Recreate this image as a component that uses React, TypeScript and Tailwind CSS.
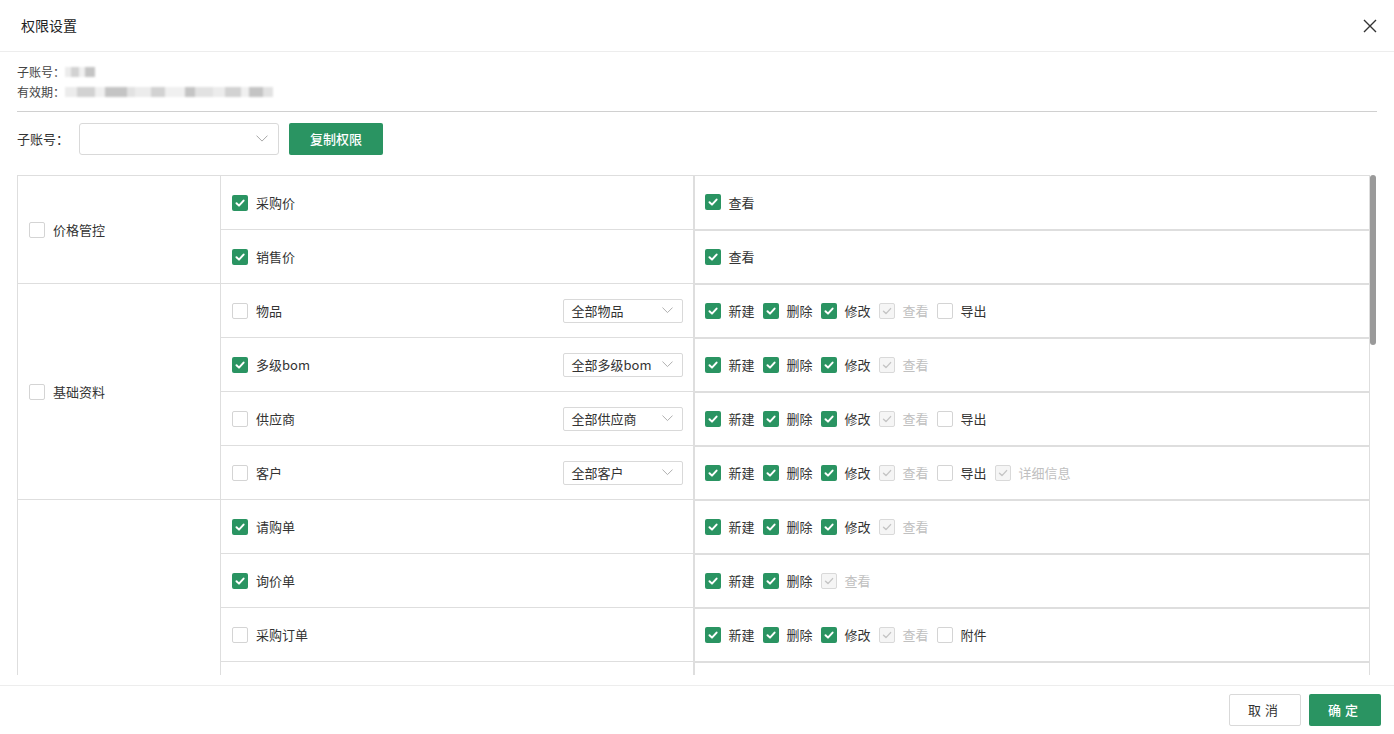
import React from 'react';

type Perm = { label: string; state: 'on' | 'off' | 'dis' };
type Item = { name: string; checked: boolean; scope?: string; perms: Perm[] };
type Group = { name: string; checked: boolean; items: Item[] };

const on = (label: string): Perm => ({ label, state: 'on' });
const off = (label: string): Perm => ({ label, state: 'off' });
const dis = (label: string): Perm => ({ label, state: 'dis' });

const crud = [on('新建'), on('删除'), on('修改'), dis('查看')];

const groups: Group[] = [
  {
    name: '价格管控',
    checked: false,
    items: [
      { name: '采购价', checked: true, perms: [on('查看')] },
      { name: '销售价', checked: true, perms: [on('查看')] },
    ],
  },
  {
    name: '基础资料',
    checked: false,
    items: [
      { name: '物品', checked: false, scope: '全部物品', perms: [...crud, off('导出')] },
      { name: '多级bom', checked: true, scope: '全部多级bom', perms: crud },
      { name: '供应商', checked: false, scope: '全部供应商', perms: [...crud, off('导出')] },
      { name: '客户', checked: false, scope: '全部客户', perms: [...crud, off('导出'), dis('详细信息')] },
    ],
  },
  {
    name: '采购管理',
    checked: false,
    items: [
      { name: '请购单', checked: true, perms: crud },
      { name: '询价单', checked: true, perms: [on('新建'), on('删除'), dis('查看')] },
      { name: '采购订单', checked: false, perms: [...crud, off('附件')] },
      { name: '采购入库', checked: false, perms: crud },
      { name: '采购退货', checked: false, perms: crud },
      { name: '付款单', checked: false, perms: crud },
      { name: '采购发票', checked: false, perms: crud },
    ],
  },
];

function Check({ state }: { state: 'on' | 'off' | 'dis' }) {
  if (state === 'on') {
    return (
      <span className="flex h-4 w-4 shrink-0 items-center justify-center rounded-[2px] bg-[#2a9462]">
        <svg width="12" height="12" viewBox="0 0 12 12" fill="none">
          <path d="M2.5 6.2 L5 8.6 L9.6 3.6" stroke="#fff" strokeWidth="2" strokeLinecap="round" strokeLinejoin="round" />
        </svg>
      </span>
    );
  }
  if (state === 'dis') {
    return (
      <span className="flex h-4 w-4 shrink-0 items-center justify-center rounded-[2px] border border-[#d9d9d9] bg-[#f5f5f5]">
        <svg width="12" height="12" viewBox="0 0 12 12" fill="none">
          <path d="M2.5 6.2 L5 8.6 L9.6 3.6" stroke="#c4c4c4" strokeWidth="1.4" strokeLinecap="round" strokeLinejoin="round" />
        </svg>
      </span>
    );
  }
  return <span className="h-4 w-4 shrink-0 rounded-[2px] border border-[#d4d4d4] bg-white" />;
}

function Chevron({ size = 12 }: { size?: number }) {
  return (
    <svg width={size} height={size * 0.6} viewBox="0 0 12 7" fill="none">
      <path d="M0.5 0.5 L6 6 L11.5 0.5" stroke="#a8a8a8" strokeWidth="1" />
    </svg>
  );
}

// masked account values
function Blur({ w }: { w: number[] }) {
  const tones = ['bg-[#ececec]', 'bg-[#d2d2d2]', 'bg-[#f0f0f0]', 'bg-[#c4c4c4]', 'bg-[#e2e2e2]'];
  return (
    <span className="inline-flex h-[10px] items-center blur-[1px]">
      {w.map((x, i) => (
        <span key={i} className={`h-full ${tones[i % tones.length]}`} style={{ width: x }} />
      ))}
    </span>
  );
}

export default function App() {
  return (
    <div
      className="flex h-[734px] w-[1394px] flex-col overflow-hidden bg-white text-[#333]"
      style={{ fontFamily: '"Noto Sans CJK SC", "Noto Sans", sans-serif' }}
    >
      {/* Header */}
      <div className="flex h-[52px] shrink-0 items-center justify-between border-b border-[#ededed] pl-[21px] pr-[17px]">
        <span className="text-[14px] text-[#222]">权限设置</span>
        <svg width="14" height="14" viewBox="0 0 14 14" fill="none">
          <path d="M1 1 L13 13 M13 1 L1 13" stroke="#333" strokeWidth="1.4" />
        </svg>
      </div>

      {/* Body */}
      <div className="flex min-h-0 flex-1 flex-col px-[17px] pt-[10px] pb-[10px]">
        <div className="text-[12px] leading-[20px] text-[#444]">
          <div className="flex items-center">
            子账号：<Blur w={[6, 8, 6, 10]} />
          </div>
          <div className="flex items-center">
            有效期：<Blur w={[12, 18, 10, 22, 8, 16, 14, 20, 10, 18, 12, 16, 8, 14, 10]} />
          </div>
        </div>
        <div className="mt-[9px] h-px bg-[#d0d0d0]" />

        <div className="mt-[11px] flex items-center">
          <span className="w-[62px] text-[13px]">子账号：</span>
          <div className="flex h-[32px] w-[200px] items-center justify-end rounded-[3px] border border-[#d9d9d9] pr-[10px]">
            <Chevron />
          </div>
          <button className="ml-[10px] h-[32px] w-[94px] rounded-[2px] bg-[#2a9462] text-[13px] font-medium text-white">
            复制权限
          </button>
        </div>

        {/* Permission table */}
        <div className="relative mt-[20px] min-h-0 flex-1 overflow-hidden">
          <table className="w-[1352px] table-fixed border-collapse text-[13px]">
            <colgroup>
              <col className="w-[203px]" />
              <col className="w-[473px]" />
              <col className="w-[676px]" />
            </colgroup>
            <tbody>
              {groups.map((g) =>
                g.items.map((it, i) => (
                  <tr key={g.name + it.name} className="h-[54px]">
                    {i === 0 && (
                      <td rowSpan={g.items.length} className="border border-[#dedede] pl-[11px] align-middle">
                        <div className="flex items-center gap-[8px]">
                          <Check state={g.checked ? 'on' : 'off'} />
                          <span>{g.name}</span>
                        </div>
                      </td>
                    )}
                    <td className="border border-[#dedede] pl-[11px] pr-[10px]">
                      <div className="flex items-center gap-[8px]">
                        <Check state={it.checked ? 'on' : 'off'} />
                        <span className="flex-1">{it.name}</span>
                        {it.scope && (
                          <div className="flex h-[24px] w-[120px] items-center justify-between rounded-[2px] border border-[#d9d9d9] pl-[8px] pr-[9px]">
                            <span className="text-[13px]">{it.scope}</span>
                            <Chevron size={11} />
                          </div>
                        )}
                      </div>
                    </td>
                    <td className="border border-[#dedede] border-l-2 border-b-2 pl-[10px]">
                      <div className="flex items-center gap-[8px]">
                        {it.perms.map((p) => (
                          <div key={p.label} className="flex items-center gap-[8px]">
                            <Check state={p.state} />
                            <span className={p.state === 'dis' ? 'text-[#c0c0c0]' : 'text-[#333]'}>{p.label}</span>
                          </div>
                        ))}
                      </div>
                    </td>
                  </tr>
                ))
              )}
            </tbody>
          </table>
          {/* scrollbar thumb */}
          <div className="absolute right-[1px] top-0 h-[170px] w-[6px] rounded-[3px] bg-[#9a9a9a]" />
        </div>
      </div>

      {/* Footer */}
      <div className="flex h-[49px] shrink-0 items-center justify-end gap-[8px] border-t border-[#ededed] pr-[13px]">
        <button className="h-[32px] w-[72px] rounded-[2px] border border-[#d9d9d9] bg-white text-[13px] tracking-[4px] text-[#333]">
          取消
        </button>
        <button className="h-[32px] w-[72px] rounded-[2px] bg-[#2a9462] text-[13px] font-medium tracking-[4px] text-white">
          确定
        </button>
      </div>
    </div>
  );
}
